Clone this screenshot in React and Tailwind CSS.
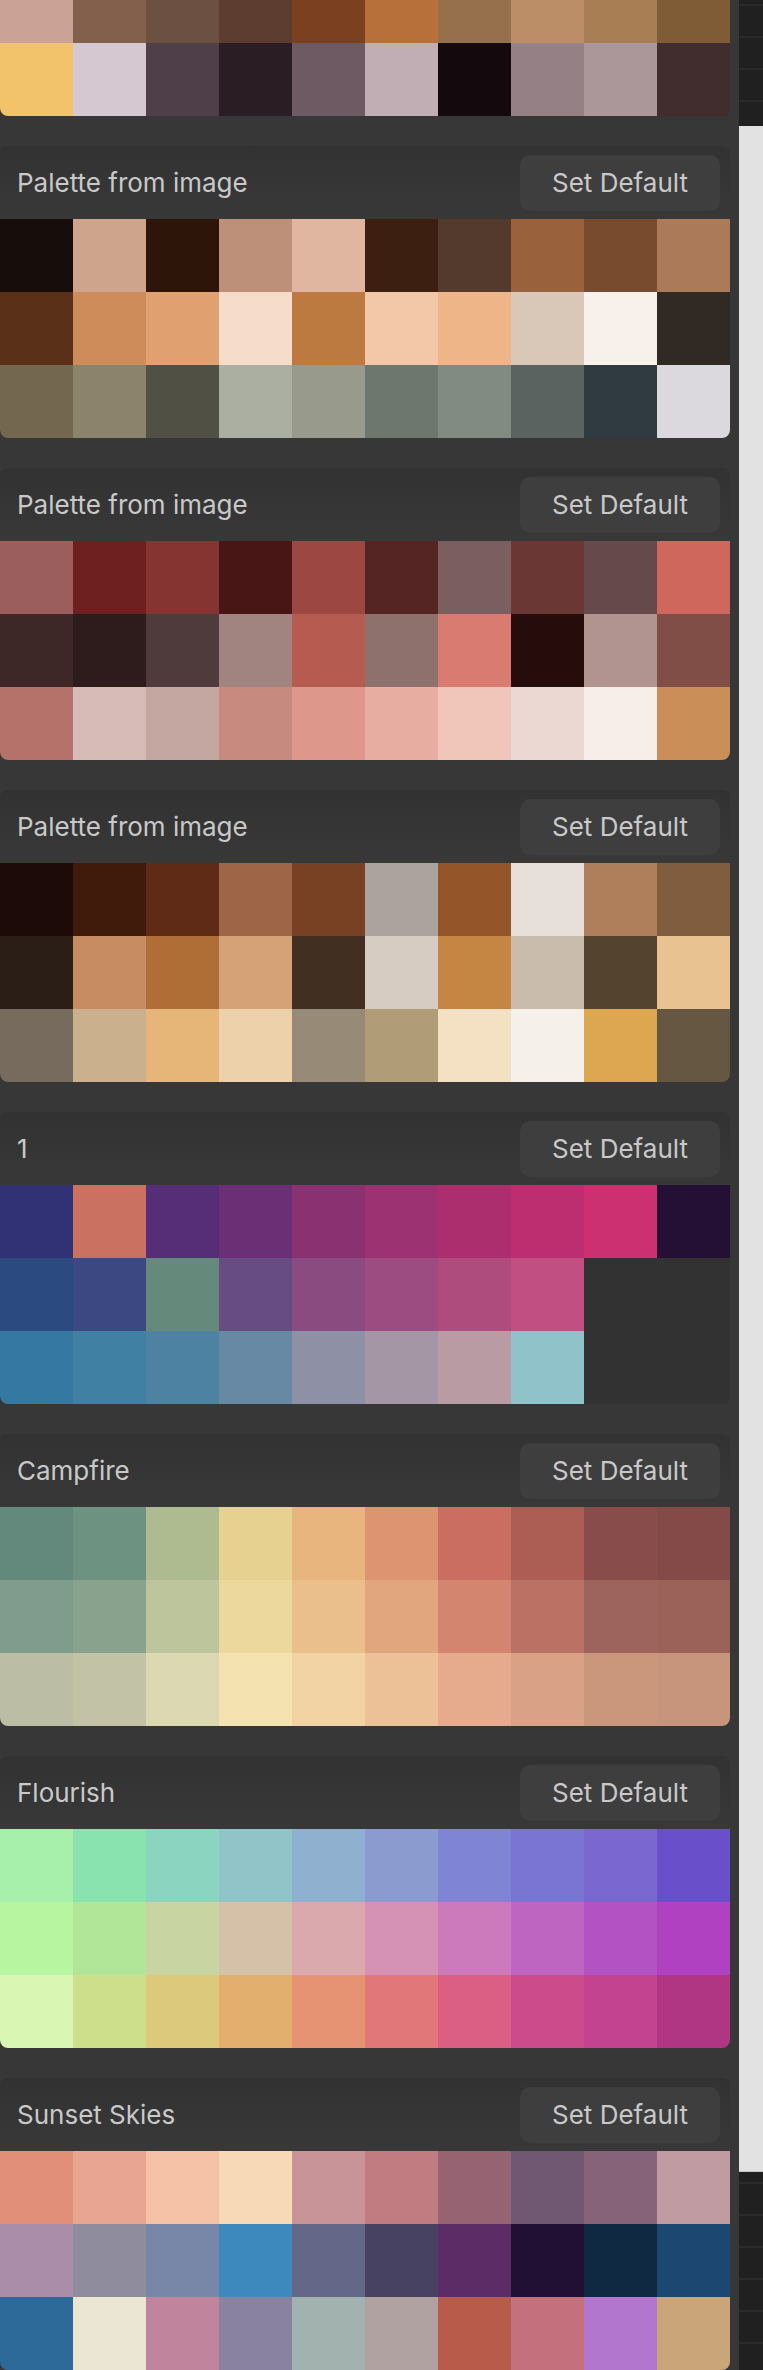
import React from "react";

const palettes = [
    {
        // scrolled past: only the lower two rows are on screen
        partial: true,
        rows: [
            ["#cba396", "#83604c", "#6c5042", "#5c3d30", "#7a401f", "#b8703a", "#96704c", "#bb8e68", "#a87e55", "#805c36"],
            ["#f2c36a", "#d5c8d0", "#4f3f48", "#2a1d24", "#6d5a63", "#c0aeb4", "#140a0d", "#948085", "#ab9799", "#412c2e"],
        ],
    },
    {
        name: "Palette from image",
        rows: [
            ["#170e0b", "#cfa48c", "#2d150a", "#bd907a", "#e0b6a0", "#3d1f12", "#533a2c", "#99613c", "#784b2f", "#ab7a58"],
            ["#5a3018", "#cf8c5b", "#e0a070", "#f5dccb", "#bd7a40", "#f2c8a8", "#eeb688", "#d9c8b8", "#f8f0ea", "#312a24"],
            ["#736750", "#8c836c", "#505044", "#abafa2", "#989b8c", "#6d776e", "#818b82", "#5a6360", "#2f3a41", "#dbd8de"],
        ],
    },
    {
        name: "Palette from image",
        rows: [
            ["#9b5e5c", "#6e2020", "#863431", "#481615", "#9d4743", "#552524", "#7b5f60", "#6b3735", "#664a4b", "#cf675d"],
            ["#3d2727", "#2e1b1b", "#4f3b3b", "#a1837f", "#b55b50", "#8e716d", "#da7b71", "#260c0a", "#b19390", "#804d47"],
            ["#b4726a", "#d7bbb7", "#c5a7a2", "#c68a7f", "#dd988b", "#e6ada0", "#f0c5ba", "#ebd8d2", "#f7ede9", "#ca8e58"],
        ],
    },
    {
        name: "Palette from image",
        rows: [
            ["#1c0b08", "#401a0b", "#5f2b16", "#9e6546", "#784123", "#aca39e", "#945628", "#e7dfda", "#af7e5b", "#815d3f"],
            ["#2a1e17", "#c88c63", "#b06e37", "#d5a176", "#413022", "#d6ccc2", "#c68643", "#c9bcad", "#54432e", "#e9c291"],
            ["#776b5d", "#cab08c", "#e5b678", "#ecd1aa", "#978b78", "#b19c78", "#f4e1c4", "#f5f0e9", "#dda650", "#665742"],
        ],
    },
    {
        name: "1",
        rows: [
            ["#313175", "#cb7161", "#562e77", "#6a2f74", "#8a3172", "#9c3271", "#ad2e6f", "#bd2e70", "#cc3070", "#240f35"],
            ["#2a4a80", "#3c4882", "#658a7b", "#664c83", "#8a4b80", "#9d4c82", "#ae4c7e", "#c24f82", null, null],
            ["#3578a2", "#4080a2", "#4e82a2", "#6789a3", "#8e91a5", "#a496a5", "#b99ca3", "#90c3c9", null, null],
        ],
    },
    {
        name: "Campfire",
        rows: [
            ["#62897b", "#6e9282", "#aebb90", "#e7d190", "#e8b57f", "#dc9570", "#ca6e61", "#ac5d54", "#884d4a", "#844a47"],
            ["#7f9c8d", "#89a28d", "#bdc59c", "#ecd89d", "#ebbf8b", "#e1a67d", "#d3856f", "#bb7264", "#9c645c", "#9a6259"],
            ["#bbbda4", "#c2c2a6", "#dcd8b1", "#f4e2b0", "#f2d3a3", "#ecc197", "#e5ab8c", "#d9a186", "#ca977d", "#c6957b"],
        ],
    },
    {
        name: "Flourish",
        rows: [
            ["#a7f0ab", "#88e3ae", "#8bd4c0", "#91c4c9", "#8fb0ce", "#8b9bcf", "#8084d4", "#7a74d2", "#7a67d0", "#6a4fcb"],
            ["#b7f5a0", "#b1e597", "#c8d4a2", "#d5c0a8", "#daa9ad", "#d592b5", "#cc7abb", "#be64c1", "#b353c3", "#b042c1"],
            ["#d9f7b3", "#cddf8a", "#dcc97b", "#e2af6f", "#e59373", "#e2777a", "#db5e84", "#cc4b8b", "#c34390", "#b03583"],
        ],
    },
    {
        name: "Sunset Skies",
        rows: [
            ["#e28f7a", "#e8a592", "#f5c2a7", "#f7d9b8", "#c99498", "#c07c80", "#966373", "#715872", "#876379", "#c09ba2"],
            ["#aa8ea9", "#8e8c9d", "#7886a8", "#3d89be", "#656788", "#474262", "#5c2c66", "#211033", "#0f2942", "#1c4770"],
            ["#2e6a99", "#ebe5d3", "#c0849d", "#8982a0", "#a2b2ae", "#afa2a1", "#b95b4b", "#c5717d", "#b376ce", "#caa57a"],
        ],
    },
];

const PaletteCard = ({ palette }) => {
    return (
        <div
            className={
                palette.partial
                    ? "w-[730px] shrink-0 rounded-b-[8px] overflow-hidden bg-[#323232]"
                    : "w-[730px] shrink-0 rounded-[8px] overflow-hidden bg-[#323232]"
            }
        >
            {!palette.partial && (
                <div className="h-[73px] flex items-center justify-between pl-[17px] pr-[10px] bg-gradient-to-b from-[#323232] to-[#383838]">
                    <span className="text-[26px] leading-none text-[#c9c9c9]">
                        {palette.name}
                    </span>
                    <button className="w-[200px] h-[56px] rounded-[10px] bg-[#3e3e3e] text-[26px] leading-none text-[#c9c9c9]">
                        Set Default
                    </button>
                </div>
            )}
            {palette.rows.map((row, i) => (
                <div key={i} className="flex h-[73px]">
                    {row.map((color, j) => (
                        <div
                            key={j}
                            className="w-[73px] h-[73px]"
                            style={{ backgroundColor: color || "#323232" }}
                        />
                    ))}
                </div>
            ))}
        </div>
    );
};

export default function App() {
    return (
        <div
            className="flex w-[763px] h-[2370px] overflow-hidden bg-[#373737]"
            style={{ fontFamily: "Inter, 'Noto Sans', sans-serif" }}
        >
            <div className="w-[739px] shrink-0 h-full overflow-hidden">
                <div className="flex flex-col gap-[30px] -mt-[30px]">
                    {palettes.map((p, i) => (
                        <PaletteCard key={i} palette={p} />
                    ))}
                </div>
            </div>
            <div className="w-[24px] h-full flex flex-col">
                <div className="h-[126px] bg-[#202020] bg-[repeating-linear-gradient(to_bottom,#202020_0px,#202020_4px,#2b2b2b_4px,#2b2b2b_6px,#202020_6px,#202020_32px)]" />
                <div className="h-[2046px] bg-[#e2e2e2] border-b border-[#c8c8c8]" />
                <div className="flex-1 bg-[#202020] bg-[repeating-linear-gradient(to_bottom,#202020_0px,#202020_10px,#2b2b2b_10px,#2b2b2b_12px,#202020_12px,#202020_32px)]" />
            </div>
        </div>
    );
}
